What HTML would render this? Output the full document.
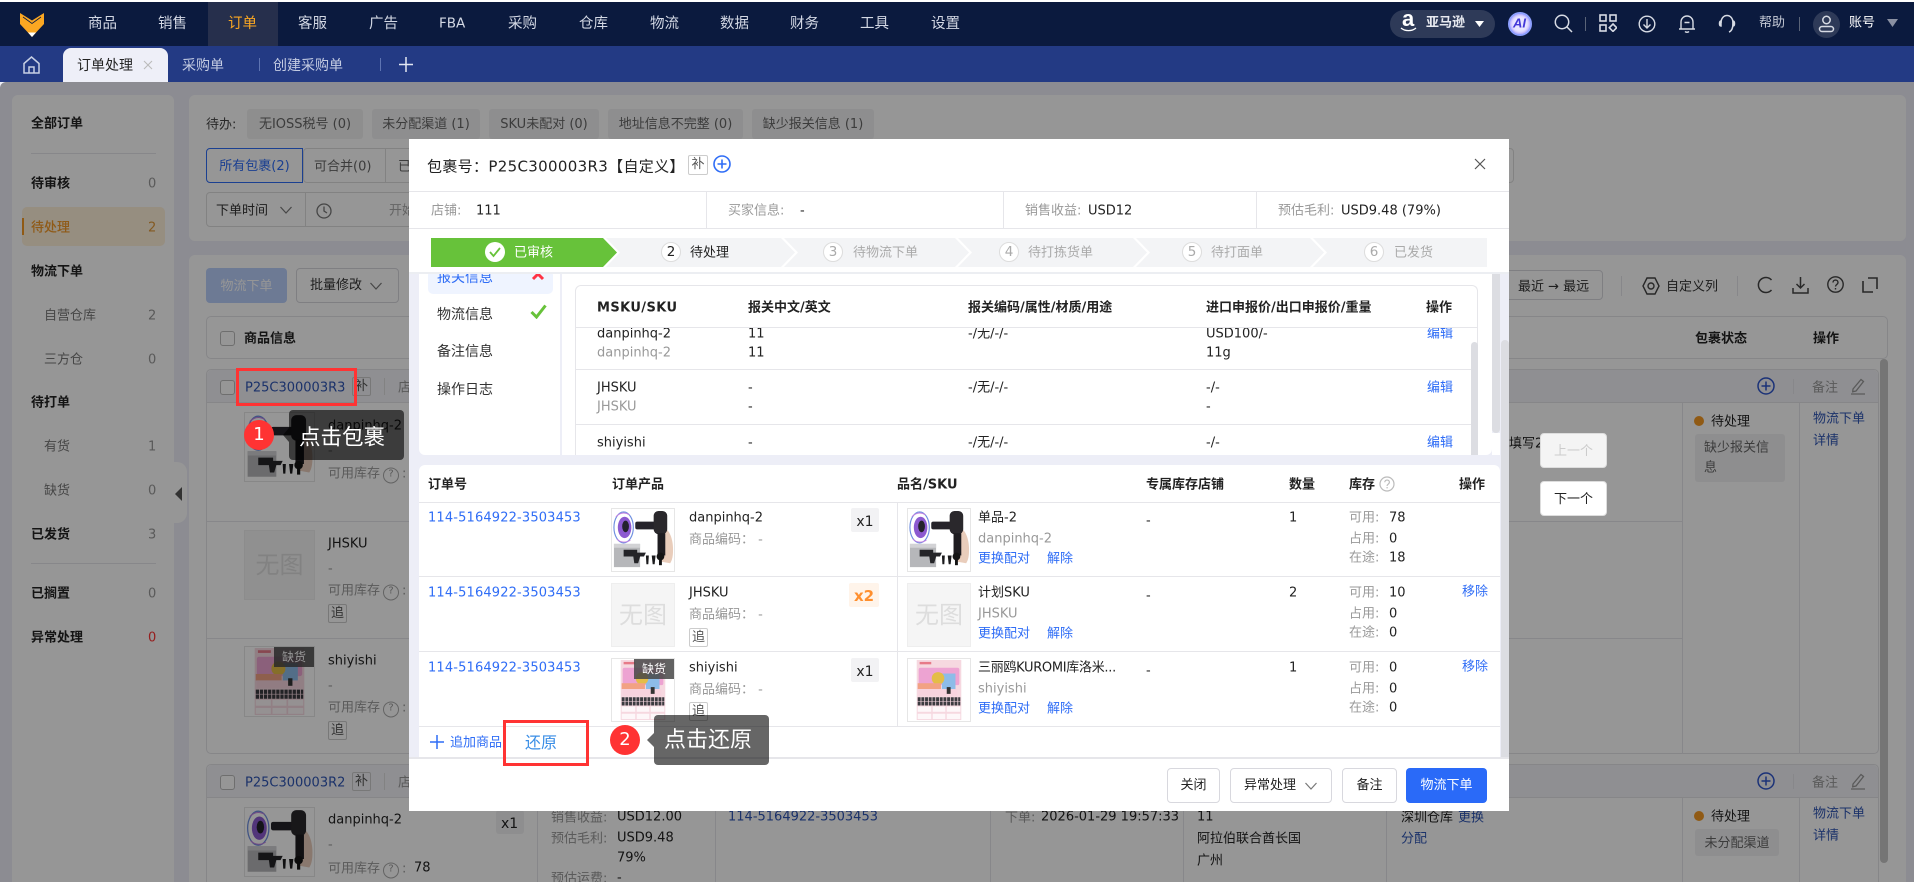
<!DOCTYPE html>
<html lang="zh-CN"><head><meta charset="utf-8"><title>订单处理</title>
<style>
html,body{margin:0;padding:0;width:1914px;height:882px;overflow:hidden;background:#eeeff8}
body{font:13px/1.3 "DejaVu Sans","Noto Sans CJK SC",sans-serif;color:#222;position:relative}
div,svg{position:absolute;box-sizing:border-box}
p{position:absolute;margin:0;white-space:nowrap;transform:translateY(calc(-50% + .15em))}
.g{color:#999}.l{color:#2f6df6}.bk{color:#2f55b5}
.h{font-weight:700;color:#222}
.n{font-size:14.5px;color:#d3d8e4}
.num{font-size:13px;color:#999}
.tag{background:#f2f2f4;border-radius:3px;text-align:center;color:#666;line-height:32px}
.mini{border:1px solid #ccc;border-radius:2px;text-align:center;font-size:13px;line-height:17px;color:#555;background:#fff}
.btn{border:1px solid #d8d8de;border-radius:4px;background:#fff;text-align:center;line-height:34px;color:#222}
.ln{background:#e6e6ea}
.ck{border:1.5px solid #bbb;border-radius:3px;width:15px;height:15px;background:#fff}
.noimg{background:#f5f5f5;border:1px solid #eee;color:#ddd;text-align:center}
.img{border:1px solid #e6e6e6;background:#fff;overflow:hidden}
.miss{background:rgba(70,70,70,.85);color:#fff;font-size:12px;text-align:center;line-height:20px;right:0;top:0;width:40px;height:20px}
.q{display:inline-block;width:14px;height:14px;border:1.2px solid #aaa;border-radius:50%;font-size:10px;line-height:12px;text-align:center;margin:0 3px;color:#999;vertical-align:1px}
</style></head><body>

<svg width="0" height="0" style="left:0;top:0">
<defs>
<symbol id="gun" viewBox="0 0 64 64">
<rect width="64" height="64" fill="#fff"/>
<path d="M55 20c5 3 8 12 8 22 0 7-1 11-3 14l-11-2-2-10z" fill="#e9cdbb"/>
<ellipse cx="12" cy="19" rx="10" ry="16" fill="none" stroke="#6f8fe0" stroke-width="1.200"/>
<ellipse cx="13" cy="19" rx="7" ry="11" fill="#8c5ad0"/>
<ellipse cx="14" cy="18" rx="3.500" ry="6" fill="#23222c"/>
<path d="M4 8c4-4 9-5 14-2M5 31c4 4 10 4 14 1" stroke="#c07ee0" stroke-width="1" fill="none"/>
<rect x="24" y="13" width="22" height="8" rx="2" fill="#25232a"/>
<rect x="43" y="2" width="14" height="24" rx="5" fill="#2a282c"/>
<rect x="47" y="25" width="8" height="23" fill="#1e1c20"/>
<rect x="2" y="36" width="27" height="24" fill="#b6b7ba"/>
<rect x="2" y="36" width="27" height="4" fill="#d2d2d5"/>
<path d="M12 42h14v3h9l-2 4h-4l-2 7h-4l-1-7h-10z" fill="#242428"/>
<path d="M35 48h3l-.5 9h-2zM41 48h4l-1 9h-2z" fill="#1a1a1c"/>
<circle cx="50" cy="49" r="4" fill="#141414"/><rect x="48.500" y="52" width="3" height="6" fill="#141414"/>
</symbol>
<symbol id="poster" viewBox="0 0 64 64">
<rect width="64" height="64" fill="#fff"/>
<rect x="9" y="1" width="46" height="62" fill="#f6d8e0"/>
<rect x="12" y="3" width="12" height="2.500" fill="#e77a88"/>
<rect x="11" y="9" width="42" height="18" rx="2" fill="#eda3d2"/>
<rect x="35" y="15" width="14" height="18" fill="#8dbce8"/>
<circle cx="31" cy="20" r="6.500" fill="#e4bd47"/>
<rect x="10" y="25" width="24" height="6" fill="#f2a283"/>
<rect x="11" y="31" width="40" height="7" fill="#f7d3de"/>
<rect x="40" y="29" width="4" height="7" fill="#333"/>
<path d="M10 41.500h44M10 46h44" stroke="#3b3b40" stroke-width="4" stroke-dasharray="3 .8"/>
<rect x="10" y="49" width="14" height="5.500" fill="#fff" opacity=".8"/><rect x="25.500" y="49" width="13" height="5.500" fill="#fff" opacity=".8"/><rect x="40" y="49" width="14" height="5.500" fill="#fff" opacity=".8"/>
<rect x="10" y="56.500" width="14" height="5.500" fill="#fff" opacity=".8"/><rect x="25.500" y="56.500" width="13" height="5.500" fill="#fff" opacity=".8"/><rect x="40" y="56.500" width="14" height="5.500" fill="#fff" opacity=".8"/>
</symbol>
</defs></svg>

<!-- ===== background page ===== -->
<div style="left:12px;top:95px;width:162px;height:787px;background:#fff;border-radius:6px 6px 0 0"></div>
<div style="left:172px;top:462px;width:15px;height:61px;background:#fff;border-radius:0 10px 10px 0"></div>
<svg style="left:175px;top:487px" width="8" height="14"><path d="M7 0v14L0 7z" fill="#555"/></svg>
<p class="h" style="left:31px;top:123px;font-weight:600">全部订单</p>
<div class="ln" style="left:31px;top:153px;width:125px;height:1px"></div>
<p class="h" style="left:31px;top:183px;font-weight:600">待审核</p><p class="num" style="left:148px;top:183px">0</p>
<div style="left:22px;top:207px;width:143px;height:39px;background:#fff1da;border-radius:5px"></div>
<div style="left:22px;top:218px;width:2px;height:17px;background:#f59a23"></div>
<p style="left:31px;top:227px;color:#f39a28;font-weight:500">待处理</p><p class="num" style="left:148px;top:227px;color:#e09a3a">2</p>
<p class="h" style="left:31px;top:271px;font-weight:600">物流下单</p>
<p style="left:44px;top:315px;color:#777">自营仓库</p><p class="num" style="left:148px;top:315px">2</p>
<p style="left:44px;top:359px;color:#777">三方仓</p><p class="num" style="left:148px;top:359px">0</p>
<p class="h" style="left:31px;top:402px;font-weight:600">待打单</p>
<p style="left:44px;top:446px;color:#777">有货</p><p class="num" style="left:148px;top:446px">1</p>
<p style="left:44px;top:490px;color:#777">缺货</p><p class="num" style="left:148px;top:490px">0</p>
<p class="h" style="left:31px;top:534px;font-weight:600">已发货</p><p class="num" style="left:148px;top:534px">3</p>
<div class="ln" style="left:31px;top:563px;width:125px;height:1px"></div>
<p class="h" style="left:31px;top:593px;font-weight:600">已搁置</p><p class="num" style="left:148px;top:593px">0</p>
<p class="h" style="left:31px;top:637px;font-weight:600">异常处理</p><p class="num" style="left:148px;top:637px;color:#f33">0</p>

<div style="left:189px;top:95px;width:1717px;height:146px;background:#fff;border-radius:6px"></div>
<p style="left:206px;top:124px;color:#444">待办:</p>
<div class="tag" style="left:247px;top:109px;width:116px;height:30px;background:#f2f2f2">无IOSS税号 (0)</div>
<div class="tag" style="left:372px;top:109px;width:108px;height:30px">未分配渠道 (1)</div>
<div class="tag" style="left:489px;top:109px;width:110px;height:30px">SKU未配对 (0)</div>
<div class="tag" style="left:608px;top:109px;width:135px;height:30px">地址信息不完整 (0)</div>
<div class="tag" style="left:752px;top:109px;width:122px;height:30px">缺少报关信息 (1)</div>
<div style="left:303px;top:148px;width:1211px;height:35px;border:1px solid #ddd;border-radius:4px"></div>
<div style="left:206px;top:148px;width:97px;height:35px;border:1px solid #2f6df6;border-radius:4px 0 0 4px;background:#fff;color:#2f6df6;text-align:center;line-height:35px">所有包裹(2)</div>
<p style="left:314px;top:166px;color:#666">可合并(0)</p>
<div style="left:385px;top:148px;width:1px;height:35px;background:#ddd"></div><p style="left:398px;top:166px;color:#666">已</p>
<div style="left:206px;top:192px;width:300px;height:35px;border:1px solid #ddd;border-radius:4px"></div>
<p style="left:216px;top:210px;color:#333">下单时间</p>
<svg style="left:279px;top:205px" width="14" height="10"><path d="M1.500 2l5.500 6 5.500-6" fill="none" stroke="#777" stroke-width="1.2"/></svg>
<div style="left:305px;top:192px;width:1px;height:35px;background:#ddd"></div>
<svg style="left:316px;top:203px" width="16" height="16" fill="none" stroke="#777" stroke-width="1.3"><circle cx="8" cy="8" r="7"/><path d="M8 3.500V8l3 2"/></svg>
<p style="left:389px;top:210px;color:#aaa">开始</p>

<div style="left:189px;top:255px;width:1717px;height:627px;background:#fff;border-radius:6px 6px 0 0"></div>
<div style="left:206px;top:268px;width:81px;height:35px;background:#b9cffb;border-radius:4px;color:#fff;text-align:center;line-height:37px">物流下单</div>
<div class="btn" style="left:296px;top:268px;width:103px;height:35px;text-align:left;padding-left:13px;color:#333">批量修改</div>
<svg style="left:369px;top:281px" width="14" height="10"><path d="M1.500 2l5.500 6 5.500-6" fill="none" stroke="#777" stroke-width="1.2"/></svg>
<div class="btn" style="left:1480px;top:270px;width:123px;height:30px"></div>
<p style="left:1518px;top:286px;color:#333">最近 → 最远</p>
<div class="ln" style="left:1621px;top:276px;width:1px;height:20px"></div>
<svg style="left:1642px;top:276px" width="18" height="20" fill="none" stroke="#444" stroke-width="1.400"><path d="M5 2h8l4 8-4 8H5l-4-8z"/><circle cx="9" cy="10" r="3"/></svg>
<p style="left:1666px;top:286px;color:#333">自定义列</p>
<div class="ln" style="left:1737px;top:276px;width:1px;height:20px"></div>
<svg style="left:1756px;top:276px" width="18" height="18" fill="none" stroke="#444" stroke-width="1.500"><path d="M15.500 4A7.500 7.500 0 1 0 15.500 14"/></svg>
<svg style="left:1792px;top:276px" width="17" height="18" fill="none" stroke="#444" stroke-width="1.500"><path d="M8.500 1v11M4.500 8l4 4 4-4M1 12v5h15v-5"/></svg>
<svg style="left:1827px;top:276px" width="17" height="17" fill="none" stroke="#444" stroke-width="1.400"><circle cx="8.500" cy="8.500" r="7.700"/><path d="M6 6.500c0-3.200 5-3.200 5 0 0 2-2.500 2-2.500 4"/><path d="M8.500 12v1.500"/></svg>
<svg style="left:1862px;top:277px" width="16" height="16" fill="none" stroke="#444" stroke-width="1.600"><path d="M6 1h9v11M1 4v11h10"/></svg>

<div style="left:206px;top:316px;width:1682px;height:43px;border:1px solid #e4e4e8;border-radius:5px;background:#fff"></div>
<div class="ck" style="left:220px;top:331px"></div>
<p class="h" style="left:244px;top:338px">商品信息</p>
<p class="h" style="left:1695px;top:338px">包裹状态</p><p class="h" style="left:1813px;top:338px">操作</p>
<div style="left:1880px;top:359px;width:8px;height:504px;background:#c8c8c8;border-radius:4px"></div>

<!-- card 1 -->
<div style="left:206px;top:369px;width:1673px;height:385px;border:1px solid #e4e4e8;border-radius:5px;background:#fff"></div>
<div style="left:207px;top:370px;width:1671px;height:33px;background:#f3f4f8;border-bottom:1px solid #e4e4e8;border-radius:5px 5px 0 0"></div>
<div class="ck" style="left:220px;top:380px"></div>
<p class="bk" style="left:245px;top:387px">P25C300003R3</p>
<div class="mini" style="left:352px;top:377px;width:19px;height:19px;background:none">补</div>
<div class="ln" style="left:384px;top:378px;width:1px;height:17px;background:#ddd"></div>
<p class="g" style="left:398px;top:387px">店</p>
<svg style="left:1757px;top:377px" width="18" height="18" fill="none" stroke="#2f55cc" stroke-width="1.500"><circle cx="9" cy="9" r="8"/><path d="M9 4.500v9M4.500 9h9"/></svg>
<div class="ln" style="left:1793px;top:379px;width:1px;height:15px"></div>
<p class="g" style="left:1812px;top:387px">备注</p>
<svg style="left:1850px;top:377px" width="16" height="18" fill="none" stroke="#999" stroke-width="1.300"><path d="M3 12l8-9.500 2.500 2L6 14l-3.300.8zM1 17h14"/></svg>
<div class="ln" style="left:1682px;top:403px;width:1px;height:351px"></div>
<div class="ln" style="left:1799px;top:403px;width:1px;height:351px"></div>
<div class="ln" style="left:207px;top:521px;width:1475px;height:1px"></div>
<div class="ln" style="left:207px;top:638px;width:1475px;height:1px"></div>
<div class="img" style="left:244px;top:412px;width:71px;height:70px"><svg width="69" height="68"><use href="#gun"/></svg></div>
<p style="left:328px;top:425px">danpinhq-2</p><p class="g" style="left:328px;top:450px">-</p><p class="g" style="left:328px;top:473px">可用库存<span class="q">?</span>:</p>
<div class="noimg" style="left:244px;top:530px;width:71px;height:70px;font-size:24px;line-height:68px">无图</div>
<p style="left:328px;top:543px">JHSKU</p><p class="g" style="left:328px;top:568px">-</p><p class="g" style="left:328px;top:590px">可用库存<span class="q">?</span>:</p>
<div class="mini" style="left:328px;top:604px;width:19px;height:19px">追</div>
<div class="img" style="left:244px;top:646px;width:71px;height:71px"><svg width="69" height="69"><use href="#poster"/></svg><div class="miss">缺货</div></div>
<p style="left:328px;top:660px">shiyishi</p><p class="g" style="left:328px;top:685px">-</p><p class="g" style="left:328px;top:707px">可用库存<span class="q">?</span>:</p>
<div class="mini" style="left:328px;top:721px;width:19px;height:19px">追</div>
<p style="left:1509px;top:443px;color:#222">填写2</p>
<div style="left:1694px;top:416px;width:10px;height:10px;border-radius:50%;background:#f59a23"></div>
<p style="left:1711px;top:421px">待处理</p>
<div style="left:1695px;top:434px;width:90px;height:48px;background:#f2f2f4;border-radius:3px"></div>
<p style="left:1704px;top:447px;color:#666">缺少报关信</p><p style="left:1704px;top:467px;color:#666">息</p>
<p class="bk" style="left:1813px;top:418px">物流下单</p><p class="bk" style="left:1813px;top:440px">详情</p>

<!-- card 2 -->
<div style="left:206px;top:764px;width:1673px;height:130px;border:1px solid #e4e4e8;border-radius:5px;background:#fff"></div>
<div style="left:207px;top:765px;width:1671px;height:33px;background:#f3f4f8;border-bottom:1px solid #e4e4e8;border-radius:5px 5px 0 0"></div>
<div class="ck" style="left:220px;top:775px"></div>
<p class="bk" style="left:245px;top:782px">P25C300003R2</p>
<div class="mini" style="left:352px;top:772px;width:19px;height:19px;background:none">补</div>
<div class="ln" style="left:384px;top:773px;width:1px;height:17px;background:#ddd"></div>
<p class="g" style="left:398px;top:782px">店</p>
<svg style="left:1757px;top:772px" width="18" height="18" fill="none" stroke="#2f55cc" stroke-width="1.500"><circle cx="9" cy="9" r="8"/><path d="M9 4.500v9M4.500 9h9"/></svg>
<div class="ln" style="left:1793px;top:774px;width:1px;height:15px"></div>
<p class="g" style="left:1812px;top:782px">备注</p>
<svg style="left:1850px;top:772px" width="16" height="18" fill="none" stroke="#999" stroke-width="1.300"><path d="M3 12l8-9.500 2.500 2L6 14l-3.300.8zM1 17h14"/></svg>
<div class="ln" style="left:537px;top:798px;width:1px;height:84px"></div>
<div class="ln" style="left:715px;top:798px;width:1px;height:84px"></div>
<div class="ln" style="left:990px;top:798px;width:1px;height:84px"></div>
<div class="ln" style="left:1183px;top:798px;width:1px;height:84px"></div>
<div class="ln" style="left:1386px;top:798px;width:1px;height:84px"></div>
<div class="ln" style="left:1682px;top:798px;width:1px;height:84px"></div>
<div class="ln" style="left:1799px;top:798px;width:1px;height:84px"></div>
<div class="img" style="left:244px;top:807px;width:71px;height:70px"><svg width="69" height="68"><use href="#gun"/></svg></div>
<p style="left:328px;top:819px">danpinhq-2</p><p class="g" style="left:328px;top:844px">-</p>
<p class="g" style="left:328px;top:868px">可用库存<span class="q">?</span>:</p><p style="left:414px;top:867px">78</p>
<div class="tag" style="left:496px;top:810px;width:28px;height:24px"></div><p style="left:501px;top:822px;font-size:14px">x1</p>
<p class="g" style="left:551px;top:817px">销售收益:</p><p style="left:617px;top:816px">USD12.00</p>
<p class="g" style="left:551px;top:838px">预估毛利:</p><p style="left:617px;top:837px">USD9.48</p>
<p style="left:617px;top:857px">79%</p>
<p class="g" style="left:551px;top:878px">预估运费:</p><p style="left:617px;top:877px">-</p>
<p class="bk" style="left:728px;top:816px">114-5164922-3503453</p>
<p class="g" style="left:1005px;top:817px">下单:</p><p style="left:1041px;top:816px">2026-01-29 19:57:33</p>
<p style="left:1197px;top:816px">11</p><p style="left:1197px;top:838px">阿拉伯联合酋长国</p><p style="left:1197px;top:860px">广州</p>
<p style="left:1401px;top:817px">深圳仓库</p><p class="bk" style="left:1458px;top:817px">更换</p><p class="bk" style="left:1401px;top:838px">分配</p>
<div style="left:1694px;top:811px;width:10px;height:10px;border-radius:50%;background:#f59a23"></div>
<p style="left:1711px;top:816px">待处理</p>
<div style="left:1695px;top:829px;width:84px;height:27px;background:#f2f2f4;border-radius:3px;color:#666;text-align:center;line-height:29px">未分配渠道</div>
<p class="bk" style="left:1813px;top:813px">物流下单</p><p class="bk" style="left:1813px;top:835px">详情</p>

<!-- overlay -->
<div style="left:0;top:82px;width:1914px;height:800px;background:rgba(0,0,0,.41);border-radius:6px 0 0 0"></div>

<!-- ===== nav ===== -->
<div style="left:0;top:0;width:1914px;height:2px;background:#fff"></div>
<div style="left:0;top:2px;width:1914px;height:44px;background:#0b1a3e"></div>
<div style="left:208px;top:2px;width:70px;height:44px;background:#262f4c"></div>
<div style="left:0;top:46px;width:1914px;height:36px;background:#233a84"></div>
<svg style="left:20px;top:13px" width="24" height="24"><path d="M0 0l12 7.500L24 0v11l-7 7.500-5 5.500-5-5.500-7-7.500z" fill="#fba722"/><path d="M3 4l9 6.500L21 4" fill="none" stroke="#0b1a3e" stroke-width=".8"/><path d="M8 19.500h8L12 24z" fill="#fff"/></svg>
<p class="n" style="left:88px;top:22px">商品</p><p class="n" style="left:158px;top:22px">销售</p>
<p class="n" style="left:228px;top:22px;color:#fba722">订单</p><p class="n" style="left:298px;top:22px">客服</p>
<p class="n" style="left:369px;top:22px">广告</p><p class="n" style="left:439px;top:22px;font-size:13.5px">FBA</p>
<p class="n" style="left:508px;top:22px">采购</p><p class="n" style="left:579px;top:22px">仓库</p>
<p class="n" style="left:650px;top:22px">物流</p><p class="n" style="left:720px;top:22px">数据</p>
<p class="n" style="left:790px;top:22px">财务</p><p class="n" style="left:860px;top:22px">工具</p>
<p class="n" style="left:931px;top:22px">设置</p>

<div style="left:1390px;top:10px;width:105px;height:28px;border-radius:14px;background:#2e3a58"></div>
<p style="left:1402px;top:16px;color:#fff;font-weight:700;font-size:22px;font-family:'Liberation Sans',sans-serif">a</p>
<svg style="left:1400px;top:27px" width="17" height="6"><path d="M1 1c4 3.500 11 3.500 15 0" fill="none" stroke="#fff" stroke-width="1.300"/></svg>
<p style="left:1426px;top:22px;color:#e8eaf0;font-size:13px;font-weight:600">亚马逊</p>
<svg style="left:1475px;top:21px" width="9" height="6"><path d="M0 0h9L4.500 6z" fill="#fff"/></svg>
<div style="left:1508px;top:12px;width:24px;height:24px;border-radius:50%;background:#e9e6ff;border:2px solid #8ea0ff;box-shadow:inset 0 0 3px #7f6bff"></div>
<p style="left:1513px;top:22px;font-size:13px;font-weight:700;font-style:italic;color:#4338d8;font-family:'Liberation Sans',sans-serif">AI</p>
<svg style="left:1554px;top:14px" width="19" height="19" fill="none" stroke="#d7dbe4" stroke-width="1.500"><circle cx="8" cy="8" r="6.700"/><path d="M13 13l5 5"/></svg>
<div style="left:1585px;top:17px;width:1px;height:14px;background:#5a6478"></div>
<svg style="left:1599px;top:14px" width="18" height="18" fill="none" stroke="#d7dbe4" stroke-width="1.600"><rect x="1" y="1" width="6" height="6"/><rect x="11" y="1" width="6" height="6"/><rect x="1" y="11" width="6" height="6"/><path d="M14 10l3.700 3.700L14 17.400l-3.700-3.700z"/></svg>
<svg style="left:1638px;top:15px" width="18" height="18" fill="none" stroke="#d7dbe4" stroke-width="1.400"><circle cx="9" cy="9" r="7.800"/><path d="M9 4v9M5.500 9.500L9 13l3.500-3.500"/></svg>
<svg style="left:1678px;top:14px" width="18" height="20" fill="none" stroke="#d7dbe4" stroke-width="1.400"><path d="M3 15V8a6 6 0 0 1 12 0v7zM1 15h16M6.500 8.500h5M7 17.500c1 1 3 1 4 0"/></svg>
<svg style="left:1718px;top:14px" width="18" height="20" fill="none" stroke="#d7dbe4" stroke-width="1.500"><path d="M3 9c0-10 12-10 12 0 0 5-1 8-4 9"/><path d="M3 7C1 7 1 12 3 12zM15 7c2 0 2 5 0 5z"/></svg>
<p style="left:1759px;top:22px;color:#c3c8d4;font-size:13px">帮助</p>
<div style="left:1799px;top:17px;width:1px;height:14px;background:#5a6478"></div>
<div style="left:1813px;top:11px;width:27px;height:27px;border-radius:50%;background:#2e3a58"></div>
<svg style="left:1818px;top:15px" width="17" height="18" fill="none" stroke="#d7dbe4" stroke-width="1.500"><circle cx="8.500" cy="5" r="3.700"/><rect x="1.500" y="11.500" width="14" height="5" rx="2.500"/></svg>
<p style="left:1849px;top:22px;color:#fff;font-size:13px">账号</p>
<svg style="left:1887px;top:19px" width="11" height="8"><path d="M0 0h11L5.500 8z" fill="#8a90a2"/></svg>

<!-- tabs -->
<svg style="left:23px;top:56px" width="17" height="18" fill="none" stroke="#c8d0e4" stroke-width="1.500"><path d="M1 7.500L8.500 1 16 7.500V17H1z"/><path d="M6 17v-6h5v6"/></svg>
<div style="left:63px;top:48px;width:105px;height:34px;background:#eeeff8;border-radius:8px 8px 0 0"></div>
<p style="left:77px;top:64px;font-size:14px;color:#222">订单处理</p>
<svg style="left:143px;top:60px" width="10" height="10"><path d="M1 1l8 8M9 1l-8 8" stroke="#bbb" stroke-width="1.100"/></svg>
<p style="left:182px;top:64px;font-size:14px;color:#c3cbe2">采购单</p>
<div style="left:259px;top:58px;width:1px;height:13px;background:#5e74b2"></div>
<p style="left:273px;top:64px;font-size:14px;color:#c3cbe2">创建采购单</p>
<div style="left:380px;top:58px;width:1px;height:13px;background:#5e74b2"></div>
<svg style="left:399px;top:57px" width="14" height="15"><path d="M7 0v15M0 7.500h14" stroke="#e3e7f2" stroke-width="1.500"/></svg>

<!-- prev / next -->
<div style="left:1540px;top:433px;width:67px;height:35px;background:#f4f4f4;border-radius:4px;text-align:center;line-height:35px;color:#ccc;border:1px solid #ddd">上一个</div>
<div style="left:1540px;top:481px;width:67px;height:35px;background:#fff;border-radius:4px;text-align:center;line-height:35px;color:#222;border:1px solid #ddd">下一个</div>

<!-- ===== modal ===== -->
<div style="left:409px;top:139px;width:1100px;height:672px;background:#fff"></div>
<div style="left:409px;top:274px;width:1100px;height:484px;background:#edeef7"></div>

<!-- upper panel -->
<div style="left:419px;top:274px;width:1073px;height:181px;background:#fff;border-radius:0 0 6px 6px"></div>
<div style="left:560px;top:274px;width:2px;height:181px;background:#edeef7"></div>
<div style="left:428px;top:270px;width:125px;height:24px;background:#eff4ff;border-radius:5px"></div>
<p style="left:437px;top:276px;font-size:14px;color:#2f6df6">报关信息</p>
<svg style="left:531px;top:267px" width="14" height="14"><path d="M2 2l10 10M12 2L2 12" stroke="#f34" stroke-width="3"/></svg>
<p style="left:437px;top:313px;font-size:14px;color:#333">物流信息</p>
<svg style="left:530px;top:304px" width="17" height="15"><path d="M1.500 8l5 5L15.500 1.500" fill="none" stroke="#67c23a" stroke-width="3"/></svg>
<p style="left:437px;top:350px;font-size:14px;color:#333">备注信息</p>
<p style="left:437px;top:388px;font-size:14px;color:#333">操作日志</p>

<div style="left:575px;top:285px;width:903px;height:170px;border:1px solid #e6e6ea;border-bottom:0;border-radius:6px 6px 0 0"></div>
<p style="left:597px;top:333px">danpinhq-2</p><p class="g" style="left:597px;top:352px">danpinhq-2</p>
<p style="left:748px;top:333px">11</p><p style="left:748px;top:352px">11</p>
<p style="left:968px;top:333px">-/无/-/-</p><p style="left:1206px;top:333px">USD100/-</p><p style="left:1206px;top:352px">11g</p>
<p class="l" style="left:1427px;top:333px">编辑</p>
<div class="ln" style="left:576px;top:369px;width:895px;height:1px"></div>
<p style="left:597px;top:387px">JHSKU</p><p class="g" style="left:597px;top:406px">JHSKU</p>
<p style="left:748px;top:387px">-</p><p style="left:748px;top:406px">-</p>
<p style="left:968px;top:387px">-/无/-/-</p><p style="left:1206px;top:387px">-/-</p><p style="left:1206px;top:406px">-</p>
<p class="l" style="left:1427px;top:387px">编辑</p>
<div class="ln" style="left:576px;top:424px;width:895px;height:1px"></div>
<p style="left:597px;top:442px">shiyishi</p><p style="left:748px;top:442px">-</p>
<p style="left:968px;top:442px">-/无/-/-</p><p style="left:1206px;top:442px">-/-</p>
<p class="l" style="left:1427px;top:442px">编辑</p>
<!-- covers for scroll clip -->
<div style="left:576px;top:286px;width:901px;height:42px;background:#fff;border-bottom:1px solid #e6e6ea;border-radius:6px 6px 0 0"></div>
<p class="h" style="left:597px;top:307px;letter-spacing:.4px">MSKU/SKU</p>
<p class="h" style="left:748px;top:307px">报关中文/英文</p>
<p class="h" style="left:968px;top:307px">报关编码/属性/材质/用途</p>
<p class="h" style="left:1206px;top:307px">进口申报价/出口申报价/重量</p>
<p class="h" style="left:1426px;top:307px">操作</p>
<div style="left:409px;top:455px;width:1091px;height:10px;background:#edeef7"></div>
<div style="left:1471px;top:342px;width:7px;height:113px;background:#dcdde2;border-radius:4px 4px 0 0"></div>
<div style="left:1492px;top:274px;width:8px;height:159px;background:#dcdde2;border-radius:0 0 4px 4px"></div>
<div style="left:1492px;top:433px;width:8px;height:22px;background:#fff"></div>
<div style="left:1501px;top:340px;width:8px;height:417px;background:#dcdde2;border-radius:4px 4px 0 0"></div>

<!-- header area -->
<div style="left:409px;top:139px;width:1100px;height:135px;background:#fff;border-bottom:2px solid #eceef2"></div>
<p style="left:427px;top:165px;font-size:15px;letter-spacing:.33px;color:#222">包裹号：P25C300003R3【自定义】</p>
<div class="mini" style="left:688px;top:155px;width:20px;height:20px;line-height:18px">补</div>
<svg style="left:713px;top:155px" width="18" height="18" fill="none" stroke="#2f6df6" stroke-width="1.600"><circle cx="9" cy="9" r="8"/><path d="M9 4.500v9M4.500 9h9"/></svg>
<svg style="left:1474px;top:158px" width="12" height="12"><path d="M1 1l10 10M11 1L1 11" stroke="#555" stroke-width="1.200"/></svg>
<div style="left:409px;top:191px;width:1100px;height:1px;background:#e6e6ea"></div>
<div style="left:409px;top:228px;width:1100px;height:1px;background:#e6e6ea"></div>
<div style="left:706px;top:192px;width:1px;height:36px;background:#e6e6ea"></div>
<div style="left:1003px;top:192px;width:1px;height:36px;background:#e6e6ea"></div>
<div style="left:1256px;top:192px;width:1px;height:36px;background:#e6e6ea"></div>
<p class="g" style="left:431px;top:210px">店铺:</p><p style="left:476px;top:210px">111</p>
<p class="g" style="left:728px;top:210px">买家信息:</p><p style="left:800px;top:210px">-</p>
<p class="g" style="left:1025px;top:210px">销售收益:</p><p style="left:1088px;top:210px">USD12</p>
<p class="g" style="left:1278px;top:210px">预估毛利:</p><p style="left:1341px;top:210px">USD9.48 (79%)</p>

<!-- steps -->
<svg style="left:431px;top:238px" width="1056" height="29">
<polygon points="175,0 350,0 364,14.500 350,29 175,29 189,14.500" fill="#f3f4f6"/>
<polygon points="353,0 524,0 538,14.500 524,29 353,29 367,14.500" fill="#f3f4f6"/>
<polygon points="527,0 702,0 716,14.500 702,29 527,29 541,14.500" fill="#f3f4f6"/>
<polygon points="705,0 879,0 893,14.500 879,29 705,29 719,14.500" fill="#f3f4f6"/>
<polygon points="882,0 1056,0 1056,29 882,29 896,14.500" fill="#f3f4f6"/>
<polygon points="0,0 172,0 186,14.500 172,29 0,29" fill="#67c23a"/>
</svg>
<div style="left:485px;top:242px;width:20px;height:20px;border-radius:50%;background:#fff"></div>
<svg style="left:489px;top:246px" width="12" height="12"><path d="M1 6l3.500 4L11 2" fill="none" stroke="#67c23a" stroke-width="1.800"/></svg>
<p style="left:514px;top:252px;color:#fff">已审核</p>
<div style="left:661px;top:242px;width:20px;height:20px;border-radius:50%;background:#fff;border:1px solid #ddd;text-align:center;line-height:19px;font-size:13.500px;color:#222">2</div>
<p style="left:690px;top:252px;color:#222">待处理</p>
<div style="left:823px;top:242px;width:20px;height:20px;border-radius:50%;background:#fff;border:1px solid #ddd;text-align:center;line-height:19px;font-size:13.500px;color:#aaa">3</div>
<p style="left:853px;top:252px;color:#aaa">待物流下单</p>
<div style="left:999px;top:242px;width:20px;height:20px;border-radius:50%;background:#fff;border:1px solid #ddd;text-align:center;line-height:19px;font-size:13.500px;color:#aaa">4</div>
<p style="left:1028px;top:252px;color:#aaa">待打拣货单</p>
<div style="left:1182px;top:242px;width:20px;height:20px;border-radius:50%;background:#fff;border:1px solid #ddd;text-align:center;line-height:19px;font-size:13.500px;color:#aaa">5</div>
<p style="left:1211px;top:252px;color:#aaa">待打面单</p>
<div style="left:1364px;top:242px;width:20px;height:20px;border-radius:50%;background:#fff;border:1px solid #ddd;text-align:center;line-height:19px;font-size:13.500px;color:#aaa">6</div>
<p style="left:1394px;top:252px;color:#aaa">已发货</p>

<!-- lower panel -->
<div style="left:419px;top:465px;width:1081px;height:292px;background:#fff;border-radius:6px 6px 0 0"></div>
<p class="h" style="left:428px;top:484px">订单号</p><p class="h" style="left:612px;top:484px">订单产品</p>
<p class="h" style="left:897px;top:484px">品名/SKU</p><p class="h" style="left:1146px;top:484px">专属库存店铺</p>
<p class="h" style="left:1289px;top:484px">数量</p><p class="h" style="left:1349px;top:484px">库存</p>
<svg style="left:1379px;top:476px" width="16" height="16" fill="none" stroke="#bbb" stroke-width="1.200"><circle cx="8" cy="8" r="7"/><path d="M5.800 6.300c0-3 4.600-3 4.600 0 0 1.700-2.300 1.800-2.300 3.600M8.100 11v1.400"/></svg>
<p class="h" style="left:1459px;top:484px">操作</p>
<div class="ln" style="left:419px;top:502px;width:1081px;height:1px"></div>
<div class="ln" style="left:419px;top:576px;width:1081px;height:1px"></div>
<div class="ln" style="left:419px;top:651px;width:1081px;height:1px"></div>
<div class="ln" style="left:419px;top:726px;width:1081px;height:1px"></div>
<div class="ln" style="left:897px;top:502px;width:1px;height:224px"></div>

<p class="l" style="left:428px;top:517px;letter-spacing:.15px">114-5164922-3503453</p>
<div class="img" style="left:611px;top:508px;width:64px;height:64px"><svg width="62" height="62"><use href="#gun"/></svg></div>
<p style="left:689px;top:517px">danpinhq-2</p><p class="g" style="left:689px;top:539px">商品编码： -</p>
<div style="left:851px;top:508px;width:28px;height:24px;background:#f2f2f4;border-radius:2px;text-align:center;font-size:14px;line-height:28px">x1</div>
<div class="img" style="left:907px;top:508px;width:64px;height:64px"><svg width="62" height="62"><use href="#gun"/></svg></div>
<p style="left:978px;top:517px">单品-2</p><p class="g" style="left:978px;top:538px">danpinhq-2</p><p class="l" style="left:978px;top:558px">更换配对</p><p class="l" style="left:1047px;top:558px">解除</p>
<p style="left:1146px;top:520px">-</p><p style="left:1289px;top:517px">1</p>
<p class="g" style="left:1349px;top:517px">可用:</p><p style="left:1389px;top:517px">78</p>
<p class="g" style="left:1349px;top:538px">占用:</p><p style="left:1389px;top:538px">0</p>
<p class="g" style="left:1349px;top:557px">在途:</p><p style="left:1389px;top:557px">18</p>

<p class="l" style="left:428px;top:592px;letter-spacing:.15px">114-5164922-3503453</p>
<div class="noimg" style="left:611px;top:583px;width:64px;height:64px;font-size:24px;line-height:62px">无图</div>
<p style="left:689px;top:592px">JHSKU</p><p class="g" style="left:689px;top:614px">商品编码： -</p>
<div class="mini" style="left:689px;top:628px;width:19px;height:19px">追</div>
<div style="left:849px;top:583px;width:30px;height:24px;background:#fff4ea;border-radius:2px;text-align:center;font-size:15px;font-weight:700;line-height:27px;color:#ff8f2e">x2</div>
<div class="noimg" style="left:907px;top:583px;width:64px;height:64px;font-size:24px;line-height:62px">无图</div>
<p style="left:978px;top:592px">计划SKU</p><p class="g" style="left:978px;top:613px">JHSKU</p><p class="l" style="left:978px;top:633px">更换配对</p><p class="l" style="left:1047px;top:633px">解除</p>
<p style="left:1146px;top:595px">-</p><p style="left:1289px;top:592px">2</p>
<p class="g" style="left:1349px;top:592px">可用:</p><p style="left:1389px;top:592px">10</p>
<p class="g" style="left:1349px;top:613px">占用:</p><p style="left:1389px;top:613px">0</p>
<p class="g" style="left:1349px;top:632px">在途:</p><p style="left:1389px;top:632px">0</p>
<p class="l" style="left:1462px;top:591px">移除</p>

<p class="l" style="left:428px;top:667px;letter-spacing:.15px">114-5164922-3503453</p>
<div class="img" style="left:611px;top:658px;width:64px;height:64px"><svg width="62" height="62"><use href="#poster"/></svg><div class="miss">缺货</div></div>
<p style="left:689px;top:667px">shiyishi</p><p class="g" style="left:689px;top:689px">商品编码： -</p>
<div class="mini" style="left:689px;top:702px;width:19px;height:19px">追</div>
<div style="left:851px;top:658px;width:28px;height:24px;background:#f2f2f4;border-radius:2px;text-align:center;font-size:14px;line-height:28px">x1</div>
<div class="img" style="left:907px;top:658px;width:64px;height:64px"><svg width="62" height="62"><use href="#poster"/></svg></div>
<p style="left:978px;top:667px;letter-spacing:-.3px">三丽鸥KUROMI库洛米...</p><p class="g" style="left:978px;top:688px">shiyishi</p><p class="l" style="left:978px;top:708px">更换配对</p><p class="l" style="left:1047px;top:708px">解除</p>
<p style="left:1146px;top:670px">-</p><p style="left:1289px;top:667px">1</p>
<p class="g" style="left:1349px;top:667px">可用:</p><p style="left:1389px;top:667px">0</p>
<p class="g" style="left:1349px;top:688px">占用:</p><p style="left:1389px;top:688px">0</p>
<p class="g" style="left:1349px;top:707px">在途:</p><p style="left:1389px;top:707px">0</p>
<p class="l" style="left:1462px;top:666px">移除</p>

<svg style="left:430px;top:735px" width="14" height="14"><path d="M7 0v14M0 7h14" stroke="#2f6df6" stroke-width="1.500"/></svg>
<p class="l" style="left:450px;top:742px">追加商品</p>
<p style="left:525px;top:741px;font-size:16px;color:#3a8ee6">还原</p>
<div style="left:409px;top:757px;width:1100px;height:2px;background:#e6e6ea"></div>

<!-- footer -->
<div class="btn" style="left:1167px;top:768px;width:53px;height:35px">关闭</div>
<div class="btn" style="left:1230px;top:768px;width:102px;height:35px;text-align:left;padding-left:13px">异常处理</div>
<svg style="left:1304px;top:781px" width="14" height="10"><path d="M1.500 2l5.500 6 5.500-6" fill="none" stroke="#777" stroke-width="1.200"/></svg>
<div class="btn" style="left:1342px;top:768px;width:55px;height:35px">备注</div>
<div style="left:1406px;top:768px;width:81px;height:35px;background:#2a6af8;border-radius:4px;color:#fff;text-align:center;line-height:36px">物流下单</div>

<!-- annotations -->
<div style="left:236px;top:368px;width:121px;height:38px;border:3px solid #f33"></div>
<div style="left:289px;top:410px;width:115px;height:50px;border-radius:4px;background:rgba(0,0,0,.6)"></div>
<svg style="left:283px;top:428px" width="6" height="14"><path d="M6 0v14L0 7z" fill="rgba(0,0,0,.6)"/></svg>
<p style="left:299px;top:435px;font-size:21.500px;color:#fff">点击包裹</p>
<div style="left:244px;top:420px;width:30px;height:30px;border-radius:50%;background:#f33;color:#fff;text-align:center;line-height:30px;font-size:18px">1</div>

<div style="left:503px;top:720px;width:86px;height:46px;border:3px solid #f33"></div>
<div style="left:654px;top:715px;width:115px;height:50px;border-radius:4px;background:rgba(0,0,0,.6)"></div>
<svg style="left:647px;top:733px" width="7" height="14"><path d="M7 0v14L0 7z" fill="rgba(0,0,0,.6)"/></svg>
<p style="left:664px;top:738px;font-size:22px;color:#fff">点击还原</p>
<div style="left:610px;top:725px;width:30px;height:30px;border-radius:50%;background:#f33;color:#fff;text-align:center;line-height:30px;font-size:18px">2</div>

</body></html>
